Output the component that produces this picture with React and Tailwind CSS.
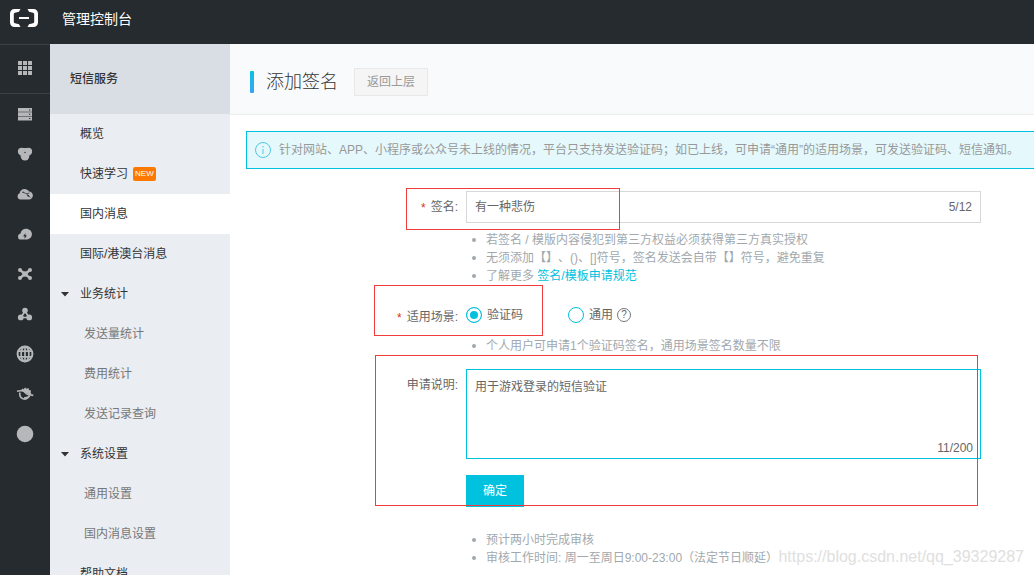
import { useState } from "react";

const menu = [
  { label: "概览" },
  { label: "快速学习", badge: "NEW" },
  { label: "国内消息", active: true },
  { label: "国际/港澳台消息" },
  {
    label: "业务统计",
    children: ["发送量统计", "费用统计", "发送记录查询"],
  },
  { label: "系统设置", children: ["通用设置", "国内消息设置"] },
  { label: "帮助文档" },
];

const GridIcon = () => (
  <svg width="16" height="16" viewBox="0 0 16 16" fill="currentColor">
    {[0, 5, 10].map((y) =>
      [1, 6, 11].map((x) => (
        <rect key={`${x}-${y}`} x={x} y={y} width="4" height="4" />
      ))
    )}
  </svg>
);

const ServerIcon = () => (
  <svg width="16" height="16" viewBox="0 0 16 16" fill="currentColor">
    <path
      fillRule="evenodd"
      d="M1 2h14v3.800H1zM1 6.300h14v3.800H1zM1 10.600h14v3.800H1zM12 3.500v.9h1.400v-.9zM12 7.800v.9h1.400v-.9zM12 12.100v.9h1.400v-.9z"
    />
  </svg>
);

const ClusterIcon = () => (
  <svg width="16" height="16" viewBox="0 0 16 16">
    <g fill="currentColor">
      <path d="M3.500 2h9l2.500 3.500-2.500 3.800-.3 2L10 14H6l-2.200-2.700-.3-2L1 5.500z" />
      <circle cx="4.600" cy="5.500" r="3.700" />
      <circle cx="11.400" cy="5.500" r="3.700" />
      <circle cx="8" cy="10.500" r="3.900" />
    </g>
    <circle cx="8" cy="6.500" r="0.700" fill="#262b2f" />
  </svg>
);

const CloudNetIcon = () => (
  <svg width="16" height="16" viewBox="0 0 16 16">
    <path
      fill="currentColor"
      d="M3.200 13.600A3.300 3.300 0 0 1 2.600 7.300C3 4.600 5 3 7.500 3c2 0 3.600.9 4.500 2.500 2.200.1 3.900 1.800 3.900 4.100 0 2.200-1.700 4-4 4z"
    />
    <g stroke="#262b2f" strokeWidth="0.700" fill="none">
      <path d="M6 6.200l3.500 1.500 1.700 2 2.300 1.600M9.500 7.700l3-.7" />
    </g>
    <g fill="#262b2f">
      <circle cx="6" cy="6.200" r="0.700" />
      <circle cx="11.200" cy="9.700" r="0.900" />
    </g>
  </svg>
);

const CloudBoltIcon = () => (
  <svg width="16" height="16" viewBox="0 0 16 16">
    <path
      fill="currentColor"
      d="M4 13.600A3 3 0 0 1 1 10.700C1 9 2 7.800 3.500 7.500 4 4.800 6.200 2.800 9 2.800c3.200 0 5.900 2.300 5.900 5.300 0 3.200-2.300 5.500-5.500 5.500z"
    />
    <path fill="#262b2f" d="M8.600 7.200L6 10.300h1.600v2.500l2.300-3.300H8.400z" />
  </svg>
);

const HubIcon = () => (
  <svg width="16" height="16" viewBox="0 0 16 16" fill="currentColor">
    <path d="M3 4l10 8M13 4L3 12" stroke="currentColor" strokeWidth="2.300" />
    <circle cx="3" cy="4" r="2" />
    <circle cx="13" cy="4" r="2" />
    <circle cx="3" cy="12" r="2" />
    <circle cx="13" cy="12" r="2" />
    <circle cx="8" cy="8" r="2.800" />
  </svg>
);

const TriadIcon = () => (
  <svg width="16" height="16" viewBox="0 0 16 16" fill="currentColor">
    <path
      d="M8 5L4 11.500h8z"
      fill="none"
      stroke="currentColor"
      strokeWidth="1.700"
    />
    <circle cx="8" cy="4.600" r="2.800" />
    <circle cx="3.800" cy="11.400" r="2.900" />
    <circle cx="12.200" cy="11.400" r="2.900" />
  </svg>
);

const GlobeIcon = () => (
  <svg
    width="18"
    height="18"
    viewBox="0 0 18 18"
    fill="none"
    stroke="currentColor"
    strokeWidth="1.700"
  >
    <circle cx="9" cy="9" r="7.400" strokeWidth="2" />
    <ellipse cx="9" cy="9" rx="3.900" ry="7.400" />
    <path d="M9 1.600v14.800M2.500 6.200h13M2.500 11.800h13" />
  </svg>
);

const PlanetIcon = () => (
  <svg width="18" height="18" viewBox="0 0 18 18">
    <path
      fill="currentColor"
      d="M5.500 6l.5-2.500 1.700.8L9 2.500l1.600 1.200 1.900-.8.5 2 2 .6-.4 2 .9 1.500-2 .4z"
    />
    <path
      d="M4 7.500A4.700 4.700 0 1 0 13.300 10.800"
      fill="none"
      stroke="currentColor"
      strokeWidth="1.700"
    />
    <path
      d="M1 6.300l5-.8c3 .2 3 3.200 6 4l5.300.9"
      fill="none"
      stroke="currentColor"
      strokeWidth="1.600"
    />
    <path
      d="M8 12.700c2 .3 4-.2 6-2.300"
      fill="none"
      stroke="currentColor"
      strokeWidth="1.400"
    />
  </svg>
);

const DotIcon = () => (
  <svg width="18" height="18" viewBox="0 0 18 18" fill="currentColor">
    <circle cx="9" cy="9" r="8.300" />
  </svg>
);

const railItems = [
  { name: "服务器", Icon: ServerIcon },
  { name: "数据库", Icon: ClusterIcon },
  { name: "网络", Icon: CloudNetIcon },
  { name: "存储", Icon: CloudBoltIcon },
  { name: "负载均衡", Icon: HubIcon },
  { name: "集群", Icon: TriadIcon },
  { name: "域名", Icon: GlobeIcon },
  { name: "监控", Icon: PlanetIcon },
  { name: "更多", Icon: DotIcon },
];

const TopBar = () => (
  <header className="flex h-11 shrink-0 items-center bg-[#262b2f] text-white">
    <a href="#" aria-label="首页" className="flex w-[50px] pb-2 pl-[9px]">
      <svg width="30" height="20" viewBox="0 0 30 20" fill="white">
        <path d="M11.500 1H5.500C3 1 1 3 1 5.500v9C1 17 3 19 5.500 19h6L10 16.200l-4-.9c-.7-.2-1.200-.7-1.200-1.500V6.200c0-.8.500-1.300 1.200-1.500l4-.9z" />
        <path d="M18.500 1h6C27 1 29 3 29 5.500v9c0 2.500-2 4.500-4.500 4.500h-6l1.500-2.800 4-.9c.7-.2 1.200-.7 1.200-1.500V6.200c0-.8-.5-1.300-1.200-1.500l-4-.9z" />
        <path d="M10 9h10v2H10z" />
      </svg>
    </a>
    <span className="pb-1.5 pl-3 text-sm">管理控制台</span>
  </header>
);

const Rail = () => (
  <nav className="flex w-[50px] shrink-0 flex-col bg-[#262b2f] text-[#b5b7b9]">
    <button
      aria-label="全部产品"
      className="flex h-[50px] shrink-0 items-center justify-center border-y border-[#3d4144]"
    >
      <GridIcon />
    </button>
    {railItems.map(({ name, Icon }) => (
      <button
        key={name}
        aria-label={name}
        className="flex h-10 shrink-0 items-center justify-center"
      >
        <Icon />
      </button>
    ))}
  </nav>
);

const Sidebar = () => (
  <aside className="w-[180px] shrink-0 bg-[#eaedf1] text-[#333]">
    <h2 className="flex h-[70px] items-center bg-[#d9dee4] pl-5 font-medium">
      短信服务
    </h2>
    <ul>
      {menu.map((item) => (
        <li key={item.label}>
          <a
            href="#"
            className={`flex h-10 items-center ${item.active ? "bg-white" : ""}`}
          >
            <span className="flex w-[30px] justify-center">
              {item.children && (
                <svg width="8" height="5" viewBox="0 0 8 5">
                  <path d="M0 0h8L4 4.500z" fill="#333" />
                </svg>
              )}
            </span>
            {item.label}
            {item.badge && (
              <span className="ml-[5px] h-3.5 rounded-xs bg-[#ff7800] px-0.5 text-[8px] leading-[14px] text-white">
                {item.badge}
              </span>
            )}
          </a>
          {item.children && (
            <ul>
              {item.children.map((child) => (
                <li key={child}>
                  <a
                    href="#"
                    className="flex h-10 items-center pl-[34px] text-[#777]"
                  >
                    {child}
                  </a>
                </li>
              ))}
            </ul>
          )}
        </li>
      ))}
    </ul>
  </aside>
);

const Hints = ({ className, children }) => (
  <ul className={`leading-[18px] text-[#a1a9ae] ${className}`}>{children}</ul>
);

const Hint = ({ children }) => (
  <li className="flex items-center">
    <span className="mx-1.5 size-1 shrink-0 rounded-full bg-[#a1a9ae]" />
    <span className="pl-1">{children}</span>
  </li>
);

const Required = () => (
  <span className="mr-[5px] inline-block align-middle leading-none text-[#d93016]">
    *
  </span>
);

// red frame drawn over a step of the form
const Mark = ({ className }) => (
  <div
    className={`pointer-events-none absolute border border-[#f23c3c] ${className}`}
  />
);

const SignForm = () => {
  const [sign, setSign] = useState("有一种悲伤");
  const [scene, setScene] = useState("code");
  const [remark, setRemark] = useState("用于游戏登录的短信验证");

  const radioClass =
    "size-4 appearance-none rounded-full border border-[#00c1de] checked:bg-[#00c1de] checked:shadow-[inset_0_0_0_3px_#fff]";

  return (
    <form
      className="mt-[22px] flex flex-col pr-[53px] text-[#666]"
      onSubmit={(e) => e.preventDefault()}
    >
      {/* Signature */}
      <div className="relative flex">
        <label htmlFor="sign" className="w-[228px] text-right leading-8">
          <Required />
          签名:
        </label>
        <div className="ml-2 flex-1">
          <div className="flex h-8 items-center border border-[#d7d8d9] px-2">
            <input
              id="sign"
              type="text"
              maxLength={12}
              value={sign}
              onChange={(e) => setSign(e.target.value)}
              className="min-w-0 flex-1 outline-none"
            />
            <span>{sign.length}/12</span>
          </div>
          <Hints className="mt-2 [text-spacing-trim:space-all]">
            <Hint>若签名 / 模版内容侵犯到第三方权益必须获得第三方真实授权</Hint>
            <Hint>
              无须添加【】、()、[]符号，签名发送会自带【】符号，避免重复
            </Hint>
            <Hint>
              了解更多{" "}
              <a href="#" className="text-[#00c1de]">
                签名/模板申请规范
              </a>
            </Hint>
          </Hints>
        </div>
        <Mark className="-top-[3px] left-44 h-[42px] w-[214px]" />
      </div>

      {/* Scene */}
      <div className="relative mt-5 flex" role="radiogroup" aria-label="适用场景">
        <span className="w-[228px] text-right leading-6">
          <Required />
          适用场景:
        </span>
        <div className="ml-2 flex-1">
          <div className="flex h-5 items-center">
            <label className="flex items-center gap-[5px]">
              <input
                type="radio"
                name="scene"
                checked={scene === "code"}
                onChange={() => setScene("code")}
                className={radioClass}
              />
              验证码
            </label>
            <label className="ml-[45px] flex items-center gap-[5px]">
              <input
                type="radio"
                name="scene"
                checked={scene === "common"}
                onChange={() => setScene("common")}
                className={radioClass}
              />
              通用
            </label>
            <button
              type="button"
              aria-label="帮助"
              className="ml-1 flex size-3.5 items-center justify-center rounded-full border border-[#777] text-[10px] leading-none"
            >
              ?
            </button>
          </div>
          <Hints className="mt-3">
            <Hint>个人用户可申请1个验证码签名，通用场景签名数量不限</Hint>
          </Hints>
        </div>
        <Mark className="-top-5 left-36 h-[51px] w-[169px]" />
      </div>

      {/* Remark */}
      <div className="relative mt-3.5 flex">
        <label htmlFor="remark" className="w-[228px] text-right leading-8">
          申请说明:
        </label>
        <div className="ml-2 flex-1">
          <div className="relative flex">
            <textarea
              id="remark"
              maxLength={200}
              value={remark}
              onChange={(e) => setRemark(e.target.value)}
              className="h-[90px] flex-1 resize-none border border-[#00c1de] px-2 py-[7px] leading-5 outline-none"
            />
            <span className="absolute right-2 bottom-0.5 leading-[18px]">
              {remark.length}/200
            </span>
          </div>
          <button
            type="submit"
            className="mt-4 block h-8 bg-[#00c1de] px-[17px] text-white"
          >
            确定
          </button>
        </div>
        <Mark className="-top-3.5 right-[3px] left-[145px] h-[151px]" />
      </div>

      <Hints className="mt-6 ml-[236px]">
        <Hint>预计两小时完成审核</Hint>
        <Hint>审核工作时间: 周一至周日9:00-23:00（法定节日顺延）</Hint>
      </Hints>
    </form>
  );
};

const App = () => {
  return (
    <div className="relative flex h-screen flex-col overflow-hidden bg-white font-['Liberation_Sans','Noto_Sans_CJK_SC',sans-serif] text-xs">
      <TopBar />
      <div className="flex min-h-0 flex-1">
        <Rail />
        <Sidebar />
        <main className="min-w-0 flex-1">
          <div className="flex h-[71px] items-center border-b border-[#ebecec] bg-[#f9fafc] pt-1.5 pl-5">
            <span className="h-[22px] w-1 rounded-[1px] bg-linear-to-b from-[#00c1de] to-[#35a4f5]" />
            <h1 className="ml-3 text-lg font-light text-[#333]">添加签名</h1>
            <button className="ml-4 h-7 border border-[#e8e8e8] bg-[#f5f5f5] px-3 text-[#999]">
              返回上层
            </button>
          </div>

          <div className="mt-4 ml-4 flex h-[38px] items-center border border-r-0 border-[#00c1de] bg-[#e5f8fc] pl-2 whitespace-nowrap text-[#999]">
            <svg
              width="16"
              height="16"
              viewBox="0 0 16 16"
              fill="none"
              stroke="#4fc9e0"
              className="mr-2 shrink-0"
            >
              <circle cx="8" cy="8" r="7.500" />
              <path d="M8 7v5M8 4v1.500" />
            </svg>
            针对网站、APP、小程序或公众号未上线的情况，平台只支持发送验证码；如已上线，可申请“通用”的适用场景，可发送验证码、短信通知。
          </div>

          <SignForm />
        </main>
      </div>
      <span className="pointer-events-none absolute right-2.5 bottom-1.5 text-base text-[#e0e0e0]">
        https://blog.csdn.net/qq_39329287
      </span>
    </div>
  );
};

export default App;
